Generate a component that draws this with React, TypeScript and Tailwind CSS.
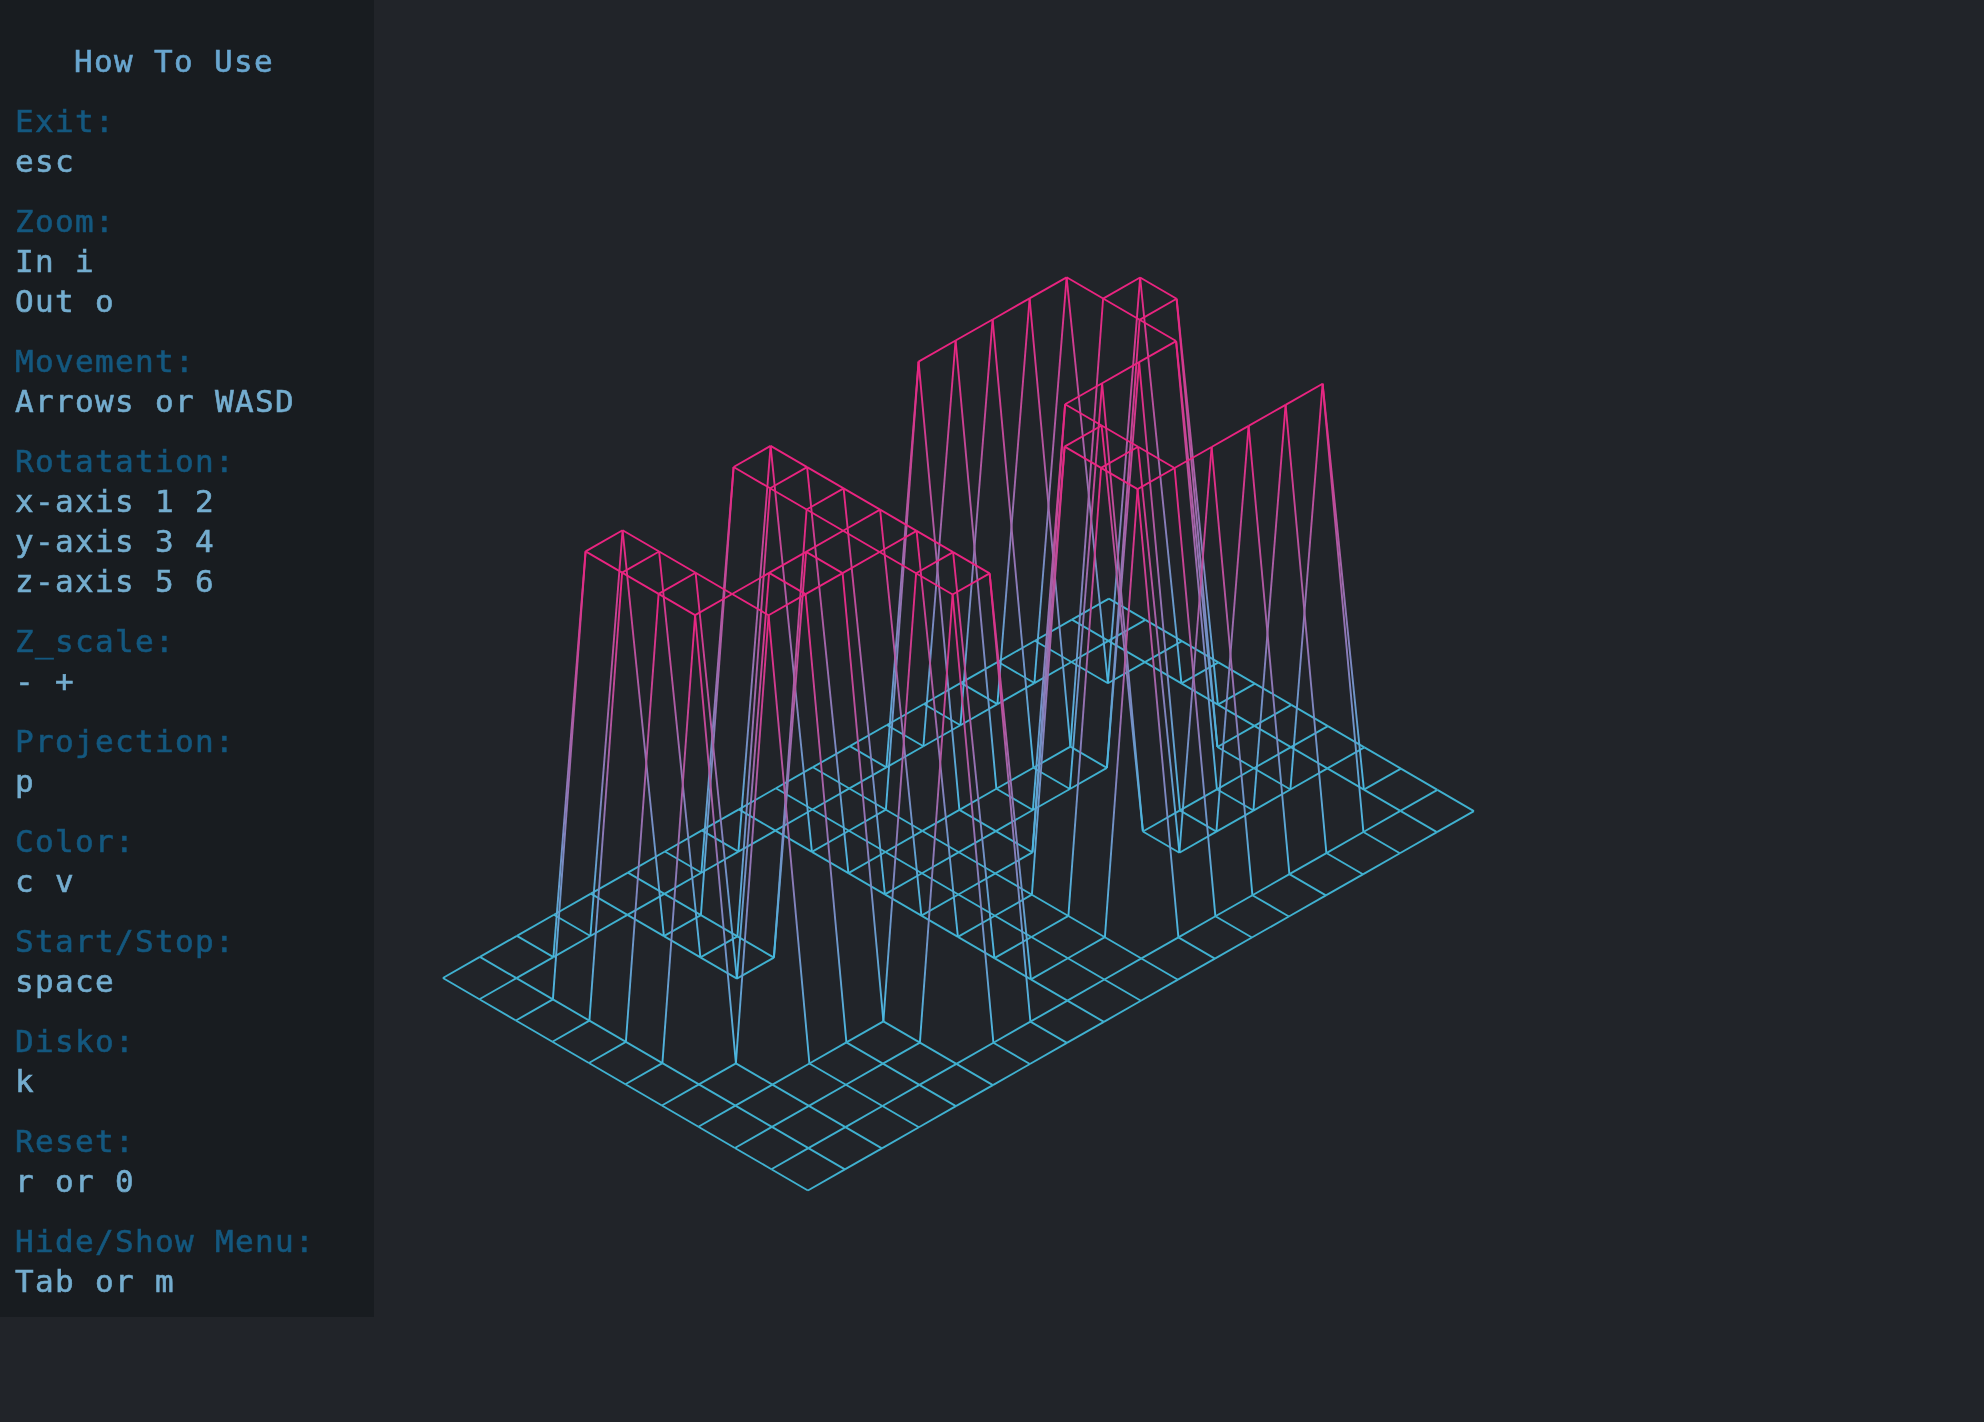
const HEIGHTS = [
  [0, 0, 0, 0, 0, 0, 0, 0, 0, 0, 0, 0, 0, 0, 0, 0, 0, 0, 0],
  [0, 0, 0, 0, 0, 0, 0, 0, 0, 0, 0, 0, 0, 0, 0, 0, 0, 0, 0],
  [0, 0, 10, 10, 0, 0, 10, 10, 0, 0, 0, 10, 10, 10, 10, 10, 0, 0, 0],
  [0, 0, 10, 10, 0, 0, 10, 10, 0, 0, 0, 0, 0, 0, 0, 10, 10, 0, 0],
  [0, 0, 10, 10, 0, 0, 10, 10, 0, 0, 0, 0, 0, 0, 0, 10, 10, 0, 0],
  [0, 0, 10, 10, 10, 10, 10, 10, 0, 0, 0, 0, 10, 10, 10, 10, 0, 0, 0],
  [0, 0, 0, 10, 10, 10, 10, 10, 0, 0, 0, 10, 10, 0, 0, 0, 0, 0, 0],
  [0, 0, 0, 0, 0, 0, 10, 10, 0, 0, 0, 10, 10, 0, 0, 0, 0, 0, 0],
  [0, 0, 0, 0, 0, 0, 10, 10, 0, 0, 0, 10, 10, 10, 10, 10, 10, 0, 0],
  [0, 0, 0, 0, 0, 0, 0, 0, 0, 0, 0, 0, 0, 0, 0, 0, 0, 0, 0],
  [0, 0, 0, 0, 0, 0, 0, 0, 0, 0, 0, 0, 0, 0, 0, 0, 0, 0, 0],
];

const LOW = '#4ab8e0';
const FLOOR = '#40b1d0';
const HIGH = '#ea2480';

function project(col: number, row: number) {
  const z = HEIGHTS[row][col];
  return {
    x: 442.9 + col * 37 + row * 36.5 - z * 0.43,
    y: 978 - col * 21.08 + row * 21.25 - z * 42.7,
    z,
  };
}

type Seg = { a: ReturnType<typeof project>; b: ReturnType<typeof project> };

function buildSegments() {
  const segs: Seg[] = [];
  HEIGHTS.forEach((line, row) => {
    line.forEach((_, col) => {
      if (col < line.length - 1) segs.push({ a: project(col, row), b: project(col + 1, row) });
      if (row < HEIGHTS.length - 1) segs.push({ a: project(col, row), b: project(col, row + 1) });
    });
  });
  return segs;
}

function Wireframe() {
  const segs = buildSegments();
  return (
    <svg className="block h-[1422px] w-[1610px] blur-[0.3px]" viewBox="374 0 1610 1422" fill="none">
      <defs>
        {segs.map((s, i) =>
          s.a.z !== s.b.z ? (
            <linearGradient key={i} id={`seg-${i}`} gradientUnits="userSpaceOnUse" x1={s.a.x} y1={s.a.y} x2={s.b.x} y2={s.b.y}>
              <stop offset="0" stopColor={s.a.z ? HIGH : LOW} />
              <stop offset="1" stopColor={s.b.z ? HIGH : LOW} />
            </linearGradient>
          ) : null
        )}
      </defs>
      {segs.map((s, i) => (
        <line
          key={i}
          x1={s.a.x}
          y1={s.a.y}
          x2={s.b.x}
          y2={s.b.y}
          strokeWidth={1.9}
          stroke={s.a.z !== s.b.z ? `url(#seg-${i})` : s.a.z ? HIGH : FLOOR}
        />
      ))}
    </svg>
  );
}

const MENU = [
  { title: 'Exit:', keys: ['esc'] },
  { title: 'Zoom:', keys: ['In i', 'Out o'] },
  { title: 'Movement:', keys: ['Arrows or WASD'] },
  { title: 'Rotatation:', keys: ['x-axis 1 2', 'y-axis 3 4', 'z-axis 5 6'] },
  { title: 'Z_scale:', keys: ['- +'] },
  { title: 'Projection:', keys: ['p'] },
  { title: 'Color:', keys: ['c v'] },
  { title: 'Start/Stop:', keys: ['space'] },
  { title: 'Disko:', keys: ['k'] },
  { title: 'Reset:', keys: ['r or 0'] },
  { title: 'Hide/Show Menu:', keys: ['Tab or m'] },
];

export default function App() {
  return (
    <div className="flex h-[1422px] w-[1984px] overflow-hidden bg-[#212429]">
      <aside className="flex h-[1317px] w-[374px] shrink-0 flex-col gap-5 bg-[#181c20] pl-[15px] pt-[41px] font-['DejaVu_Sans_Mono',monospace] text-[31px] leading-10 tracking-[1.33px] text-[#74adcf] [-webkit-text-stroke:0.6px]">
        <h1 className="pl-[59px] font-normal text-[#69a6cf] blur-[0.4px]">How To Use</h1>
        {MENU.map((group) => (
          <div key={group.title} className="blur-[0.4px]">
            <div className="text-[#14587f]">{group.title}</div>
            {group.keys.map((k) => (
              <div key={k}>{k}</div>
            ))}
          </div>
        ))}
      </aside>
      <main className="flex-1">
        <Wireframe />
      </main>
    </div>
  );
}
